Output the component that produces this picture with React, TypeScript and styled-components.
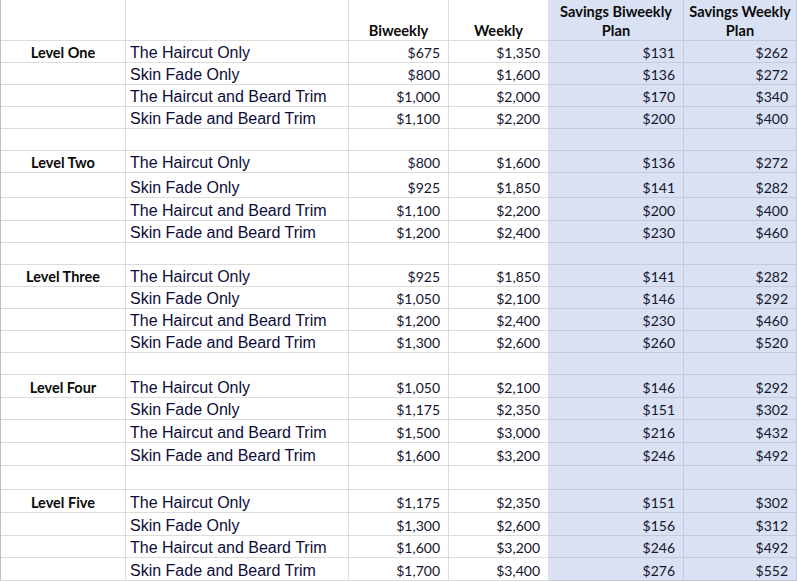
import React from "react";
import styled, { createGlobalStyle, css } from "styled-components";

const Global = createGlobalStyle`
  html, body { margin: 0; padding: 0; background: #ffffff; }
  body { font-family: "Liberation Sans", Arial, sans-serif; }
`;

const COLS = "125px 223px 100px 100px 135px 113px";

const Sheet = styled.div`
  display: flex;
  flex-direction: column;
  width: 797px;
  border-left: 1px solid #bdbdbd;
  box-sizing: border-box;
`;

const Row = styled.div<{ $h: number }>`
  display: grid;
  grid-template-columns: ${COLS};
  height: ${(p) => p.$h}px;
`;

const Cell = styled.div<{ $shade?: boolean }>`
  box-sizing: border-box;
  display: flex;
  align-items: flex-end;
  overflow: hidden;
  white-space: nowrap;
  border-right: 1px solid #dcdcdc;
  border-bottom: 1px solid #dcdcdc;
  background: #ffffff;
  color: #111111;
  ${(p) =>
    p.$shade &&
    css`
      background: #d9e1f2;
      border-right-color: #c2cadb;
      border-bottom-color: #c2cadb;
    `}
`;

const HeadCell = styled(Cell)`
  justify-content: center;
  text-align: center;
  white-space: normal;
  font-family: Lato, "Open Sans", sans-serif;
  font-weight: 700;
  font-size: 14.6px;
  line-height: 19px;
  padding-bottom: 0;
  color: #0a0a0a;
`;

const LabelCell = styled(Cell)`
  justify-content: center;
  font-family: Lato, "Open Sans", sans-serif;
  font-weight: 700;
  font-size: 14.5px;
  line-height: 18px;
  padding-bottom: 0;
  color: #0a0a0a;
`;

const ServiceCell = styled(Cell)`
  padding-left: 4px;
  font-family: "Liberation Sans", Arial, sans-serif;
  font-size: 16px;
  line-height: 18px;
  padding-bottom: 0;
  color: #0c0c3a;
`;

const NumCell = styled(Cell)`
  justify-content: flex-end;
  padding-right: 8px;
  font-family: Lato, "Open Sans", sans-serif;
  font-size: 14px;
  line-height: 18px;
  padding-bottom: 0;
  color: #14142e;
`;

type Level = {
  name: string;
  heights: number[];
  gap?: number;
  rows: [string, string, string, string, string][];
};

const SERVICES = [
  "The Haircut Only",
  "Skin Fade Only",
  "The Haircut and Beard Trim",
  "Skin Fade and Beard Trim",
];

const mk = (vals: string[][]): [string, string, string, string, string][] =>
  vals.map((v, i) => [SERVICES[i], v[0], v[1], v[2], v[3]]);

const LEVELS: Level[] = [
  {
    name: "Level One",
    heights: [22, 22, 22, 22],
    gap: 22,
    rows: mk([
      ["$675", "$1,350", "$131", "$262"],
      ["$800", "$1,600", "$136", "$272"],
      ["$1,000", "$2,000", "$170", "$340"],
      ["$1,100", "$2,200", "$200", "$400"],
    ]),
  },
  {
    name: "Level Two",
    heights: [22, 25, 23, 22],
    gap: 22,
    rows: mk([
      ["$800", "$1,600", "$136", "$272"],
      ["$925", "$1,850", "$141", "$282"],
      ["$1,100", "$2,200", "$200", "$400"],
      ["$1,200", "$2,400", "$230", "$460"],
    ]),
  },
  {
    name: "Level Three",
    heights: [22, 22, 22, 22],
    gap: 22,
    rows: mk([
      ["$925", "$1,850", "$141", "$282"],
      ["$1,050", "$2,100", "$146", "$292"],
      ["$1,200", "$2,400", "$230", "$460"],
      ["$1,300", "$2,600", "$260", "$520"],
    ]),
  },
  {
    name: "Level Four",
    heights: [23, 22, 23, 23],
    gap: 24,
    rows: mk([
      ["$1,050", "$2,100", "$146", "$292"],
      ["$1,175", "$2,350", "$151", "$302"],
      ["$1,500", "$3,000", "$216", "$432"],
      ["$1,600", "$3,200", "$246", "$492"],
    ]),
  },
  {
    name: "Level Five",
    heights: [23, 23, 22, 23],
    rows: mk([
      ["$1,175", "$2,350", "$151", "$302"],
      ["$1,300", "$2,600", "$156", "$312"],
      ["$1,600", "$3,200", "$246", "$492"],
      ["$1,700", "$3,400", "$276", "$552"],
    ]),
  },
];

function BlankRow({ h }: { h: number }) {
  return (
    <Row $h={h}>
      <Cell />
      <Cell />
      <Cell />
      <Cell />
      <Cell $shade />
      <Cell $shade />
    </Row>
  );
}

export default function App() {
  return (
    <>
      <Global />
      <Sheet>
        <Row $h={41}>
          <HeadCell />
          <HeadCell />
          <HeadCell>Biweekly</HeadCell>
          <HeadCell>Weekly</HeadCell>
          <HeadCell $shade>
            Savings Biweekly
            <br />
            Plan
          </HeadCell>
          <HeadCell $shade>
            Savings Weekly
            <br />
            Plan
          </HeadCell>
        </Row>
        {LEVELS.map((lv) => (
          <React.Fragment key={lv.name}>
            {lv.rows.map((r, i) => (
              <Row key={r[0]} $h={lv.heights[i]}>
                <LabelCell>{i === 0 ? lv.name : ""}</LabelCell>
                <ServiceCell>{r[0]}</ServiceCell>
                <NumCell>{r[1]}</NumCell>
                <NumCell>{r[2]}</NumCell>
                <NumCell $shade>{r[3]}</NumCell>
                <NumCell $shade>{r[4]}</NumCell>
              </Row>
            ))}
            {lv.gap ? <BlankRow h={lv.gap} /> : null}
          </React.Fragment>
        ))}
      </Sheet>
    </>
  );
}
